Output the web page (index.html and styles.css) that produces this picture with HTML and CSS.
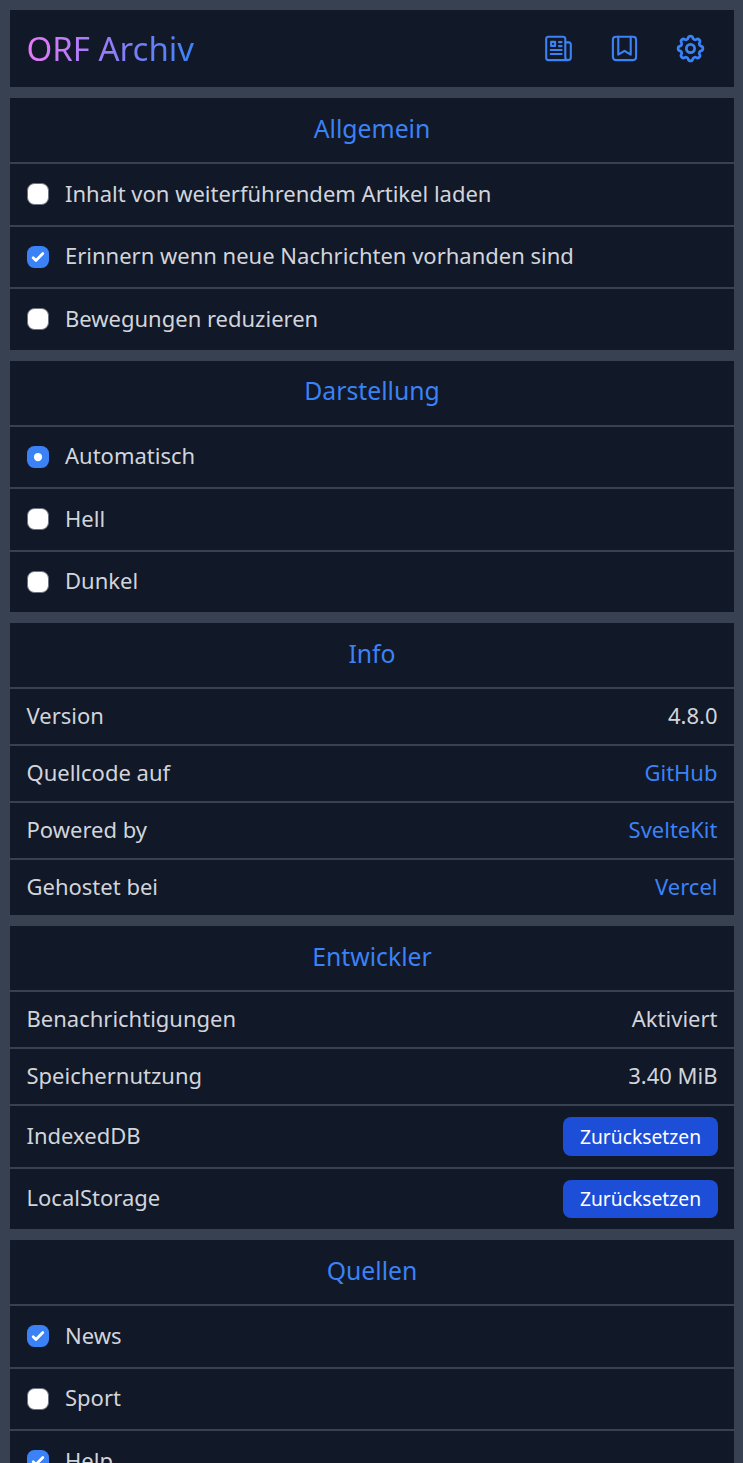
FILE: index.html
```html
<!DOCTYPE html>
<html lang="de">
<head>
<meta charset="utf-8">
<title>ORF Archiv</title>
<link rel="stylesheet" href="styles.css">
</head>
<body>
<header class="panel topbar">
  <h1 class="brand">ORF Archiv</h1>
  <nav class="nav">
    <a class="nav-link" aria-label="Nachrichten"><svg viewBox="0 0 33 33"><path d="M25.8 28.1H6.3a2.1 2.1 0 0 1-2.1-2.1V6.8a2.1 2.1 0 0 1 2.1-2.1h14.9a2.1 2.1 0 0 1 2.1 2.1v18.8a2.5 2.5 0 0 0 2.5 2.5h.5a2.5 2.5 0 0 0 2.5-2.5V12.2a1.8 1.8 0 0 0-1.8-1.8h-3.7M9.1 9.9h4v4h-4zM17 10.1h2.6M17 14.1h2.6M8.7 18h10.9M8.7 22h10.9"/></svg></a>
    <a class="nav-link" aria-label="Lesezeichen"><svg viewBox="0 0 33 33"><rect x="4.9" y="4.7" width="23.2" height="23.4" rx="3"/><path d="M10.3 4.7v18l6.2-3.8 6.2 3.8V4.7"/></svg></a>
    <a class="nav-link" aria-label="Einstellungen"><svg class="gear" viewBox="0 0 24 24"><path d="M10.325 4.317c.426-1.756 2.924-1.756 3.35 0a1.724 1.724 0 0 0 2.573 1.066c1.543-.94 3.31.826 2.37 2.37a1.724 1.724 0 0 0 1.065 2.572c1.756.426 1.756 2.924 0 3.35a1.724 1.724 0 0 0-1.066 2.573c.94 1.543-.826 3.31-2.37 2.37a1.724 1.724 0 0 0-2.572 1.065c-.426 1.756-2.924 1.756-3.35 0a1.724 1.724 0 0 0-2.573-1.066c-1.543.94-3.31-.826-2.37-2.37a1.724 1.724 0 0 0-1.065-2.572c-1.756-.426-1.756-2.924 0-3.35a1.724 1.724 0 0 0 1.066-2.573c-.94-1.543.826-3.31 2.37-2.37 1 .608 2.296.07 2.572-1.065z"/><circle cx="12" cy="12" r="3"/></svg></a>
  </nav>
</header>
<main class="sections">
  <section class="panel">
    <h2 class="heading">Allgemein</h2>
    <label class="row option"><span class="box"></span>Inhalt von weiterführendem Artikel laden</label>
    <label class="row option short"><span class="box checked"><svg viewBox="0 0 16 16"><path d="M4.5 8.5l2 2 5-5"/></svg></span>Erinnern wenn neue Nachrichten vorhanden sind</label>
    <label class="row option"><span class="box"></span>Bewegungen reduzieren</label>
  </section>
  <section class="panel">
    <h2 class="heading tight">Darstellung</h2>
    <label class="row option short"><span class="box checked"><svg viewBox="0 0 16 16"><circle class="dot" cx="8" cy="8" r="3"/></svg></span>Automatisch</label>
    <label class="row option"><span class="box"></span>Hell</label>
    <label class="row option short"><span class="box"></span>Dunkel</label>
  </section>
  <section class="panel">
    <h2 class="heading">Info</h2>
    <div class="row"><span>Version</span><span>4.8.0</span></div>
    <div class="row"><span>Quellcode auf</span><a class="link">GitHub</a></div>
    <div class="row"><span>Powered by</span><a class="link">SvelteKit</a></div>
    <div class="row"><span>Gehostet bei</span><a class="link">Vercel</a></div>
  </section>
  <section class="panel">
    <h2 class="heading">Entwickler</h2>
    <div class="row"><span>Benachrichtigungen</span><span>Aktiviert</span></div>
    <div class="row"><span>Speichernutzung</span><span>3.40 MiB</span></div>
    <div class="row action"><span class="label">IndexedDB</span><button class="button">Zurücksetzen</button></div>
    <div class="row action short"><span class="label">LocalStorage</span><button class="button">Zurücksetzen</button></div>
  </section>
  <section class="panel">
    <h2 class="heading">Quellen</h2>
    <label class="row option"><span class="box checked"><svg viewBox="0 0 16 16"><path d="M4.5 8.5l2 2 5-5"/></svg></span>News</label>
    <label class="row option short"><span class="box"></span>Sport</label>
    <label class="row option"><span class="box checked"><svg viewBox="0 0 16 16"><path d="M4.5 8.5l2 2 5-5"/></svg></span>Help</label>
  </section>
</main>
</body>
</html>
```
FILE: styles.css
```css
* { box-sizing: border-box; }
html { height: 100%; overflow: hidden; }
body {
  height: 100%;
  margin: 0;
  padding: 10px 9px 0 10px;
  overflow: hidden;
  background: #374151;
  color: #d1d5db;
  font: 22px/33px "Noto Sans", sans-serif;
}
.panel { background: #111827; }
.topbar {
  display: flex;
  align-items: center;
  justify-content: space-between;
  height: 77px;
  padding: 0 27px 0 16.5px;
}
.brand {
  margin: 0;
  font-size: 33px;
  font-weight: 400;
  line-height: 44px;
  color: transparent;
  background: linear-gradient(to right, #e879f9, #3b82f6);
  background-clip: text;
  -webkit-background-clip: text;
}
.nav { display: flex; gap: 33px; }
.nav-link { display: flex; width: 33px; height: 33px; }
.nav-link svg {
  width: 33px;
  height: 33px;
  fill: none;
  stroke: #3b82f6;
  stroke-width: 2.1;
  stroke-linecap: round;
  stroke-linejoin: round;
}
.nav-link .gear { stroke-width: 2; }
.sections { display: flex; flex-direction: column; gap: 11px; padding-top: 11px; }
.heading {
  height: 64px;
  margin: 0;
  padding-top: 12px;
  font-size: 24.75px;
  font-weight: 400;
  line-height: 38px;
  text-align: center;
  color: #3b82f6;
}
.heading.tight { padding-top: 11px; }
.row {
  display: flex;
  justify-content: space-between;
  height: 57px;
  padding: 10px 16.5px 0;
  border-top: 2px solid #374151;
}
.option {
  justify-content: flex-start;
  gap: 16.5px;
  height: 63px;
  padding-top: 13px;
}
.option.short { height: 62px; padding-top: 12px; }
.box {
  flex: none;
  width: 22px;
  height: 22px;
  margin-top: 6px;
  border: 1px solid #6b7280;
  border-radius: 7.5px;
  background: #fff;
}
.short .box { margin-top: 7px; }
.box.checked { border: 0; background: #3b82f6; }
.box svg {
  display: block;
  width: 22px;
  height: 22px;
  fill: none;
  stroke: #fff;
  stroke-width: 2;
  stroke-linecap: round;
  stroke-linejoin: round;
}
.box .dot { fill: #fff; stroke: none; }
.link { color: #3b82f6; }
.action { height: 63px; padding-top: 11px; padding-right: 16px; }
.action.short { height: 62px; }
.label { padding-top: 2px; }
.short .label { padding-top: 1px; }
.button {
  width: 155px;
  height: 39px;
  padding: 0;
  border: 0;
  border-radius: 8px;
  background: #1d4ed8;
  color: #fff;
  font: 19.25px/27.5px "Noto Sans", sans-serif;
}
.short .button { height: 38px; }
```
